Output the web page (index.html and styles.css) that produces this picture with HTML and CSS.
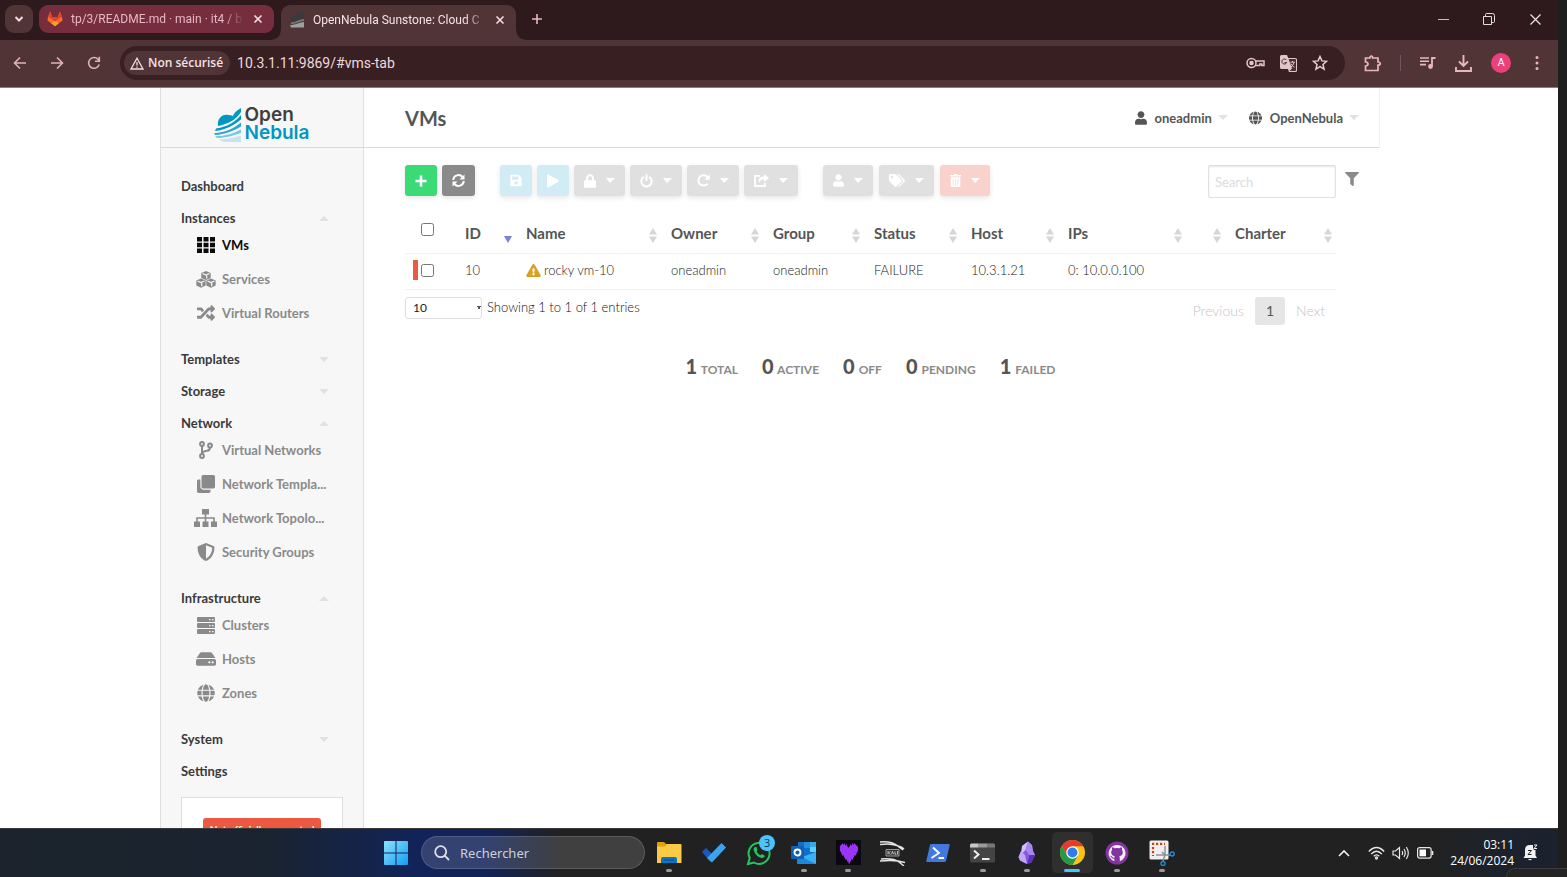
FILE: index.html
```html
<!DOCTYPE html>
<html lang="fr">
<head>
<meta charset="utf-8">
<title>OpenNebula Sunstone: Cloud Operations Center</title>
<link rel="stylesheet" href="styles.css">
</head>
<body>
<svg class="sprite" aria-hidden="true">
  <symbol id="i-globe" viewBox="0 0 496 512"><path d="M336.5 160C322 70.7 287.8 8 248 8s-74 62.7-88.5 152h177zM152 256c0 22.2 1.2 43.5 3.3 64h185.3c2.1-20.5 3.3-41.8 3.3-64s-1.2-43.5-3.3-64H155.3c-2.1 20.5-3.3 41.8-3.3 64zm324.7-96c-28.6-67.9-86.5-120.4-158-141.6 24.4 33.8 41.2 84.7 50 141.6h108zM177.2 18.4C105.8 39.6 47.8 92.1 19.3 160h108c8.7-56.9 25.5-107.8 49.9-141.6zM487.4 192H372.7c2.1 21 3.3 42.5 3.3 64s-1.2 43-3.3 64h114.6c5.5-20.5 8.6-41.8 8.6-64s-3.1-43.5-8.5-64zM120 256c0-21.5 1.2-43 3.3-64H8.6C3.2 212.5 0 233.8 0 256s3.2 43.5 8.6 64h114.6c-2-21-3.2-42.5-3.2-64zm39.5 96c14.5 89.3 48.7 152 88.5 152s74-62.7 88.5-152h-177zm159.3 141.6c71.4-21.2 129.4-73.7 158-141.6h-108c-8.8 56.9-25.6 107.8-50 141.6zM19.3 352c28.6 67.9 86.5 120.4 158 141.6-24.4-33.8-41.2-84.7-50-141.6h-108z"/></symbol>
  <symbol id="i-user" viewBox="0 0 448 512"><path d="M224 256c70.7 0 128-57.3 128-128S294.7 0 224 0 96 57.3 96 128s57.3 128 128 128zm89.6 32h-16.7c-22.2 10.2-46.9 16-72.9 16s-50.6-5.8-72.9-16h-16.7C60.2 288 0 348.2 0 422.4V464c0 26.5 21.5 48 48 48h352c26.5 0 48-21.5 48-48v-41.6c0-74.2-60.2-134.4-134.4-134.4z"/></symbol>
  <symbol id="i-sort" viewBox="0 0 8 15"><path d="M0 6.500L4 0l4 6.500zM0 8.500h8L4 15z"/></symbol>
  <symbol id="i-cross" viewBox="0 0 10 10"><path d="M1.500 1.500l7 7m0-7l-7 7" fill="none" stroke="currentColor" stroke-width="1.600"/></symbol>
</svg>
<div class="desktop">
  <div class="screen">
    <header class="tabstrip">
      <button class="tab-search" aria-label="Rechercher dans les onglets"><svg width="10" height="8" viewBox="0 0 10 8"><path d="M1.500 2L5 5.500 8.500 2" fill="none" stroke="#f0dadd" stroke-width="2"/></svg></button>
      <div class="tab">
        <svg class="favicon" width="16" height="16" viewBox="0 0 16 16"><path d="M8 15.200L.5 9.500 1 6 3.200.5 5.200 6h5.600l2-5.500L15 6l.5 3.500z" fill="#fc6d26"/><path d="M8 15.200L4.300 12.300 8 9.500l3.700 2.800z" fill="#fca326"/><path d="M3.200.5l2 5.500h5.600l2-5.500L15 6l-1 .2L8 10.500 2 6.200 1 6z" fill="#e24329"/></svg>
        <span class="tab-title">tp/3/README.md · main · it4 / b</span>
        <button class="tab-close" aria-label="Fermer"><svg width="10" height="10"><use href="#i-cross"/></svg></button>
      </div>
      <div class="tab tab-active">
        <svg class="favicon" width="14" height="16" viewBox="0 0 14 16"><path d="M2 8C1 5 4 3 6 4c1-3 4-4 8-4v6C10 6 7 9 2 9z" fill="#373b3b"/><path d="M1 10.500C6 10.500 8 7.500 14 7v2C8 9.500 7 12 1 12z" fill="#737878"/><path d="M0 13c6 0 8-2.500 14-3v5.500H1z" fill="#9da1a1"/></svg>
        <span class="tab-title">OpenNebula Sunstone: Cloud C</span>
        <button class="tab-close" aria-label="Fermer"><svg width="10" height="10"><use href="#i-cross"/></svg></button>
      </div>
      <button class="tab-new" aria-label="Nouvel onglet"><svg width="12" height="12" viewBox="0 0 12 12"><path d="M6 1v10M1 6h10" stroke="#e9b9c1" stroke-width="1.600"/></svg></button>
      <div class="window-controls">
        <button aria-label="Réduire"><svg width="11" height="11"><path d="M0 5.500h11" stroke="#c9bdbe"/></svg></button>
        <button aria-label="Niveau inférieur"><svg width="12" height="12" fill="none" stroke="#e5dcdd"><path d="M.5 3.500h8v8h-8zM2.500 3V1.500q0-1 1-1h6q2 0 2 2v6q0 1-1 1H9"/></svg></button>
        <button aria-label="Fermer la fenêtre"><svg width="11" height="11"><path d="M.5.5l10 10m0-10l-10 10" stroke="#eee5e6" stroke-width="1.200"/></svg></button>
      </div>
    </header>
    <nav class="toolbar" aria-label="Navigation">
      <div class="nav-buttons">
        <button aria-label="Retour"><svg width="14" height="14" viewBox="0 0 14 14" fill="none" stroke="#e0b3ba" stroke-width="1.600"><path d="M13 7H2M7 1.500L1.500 7 7 12.500"/></svg></button>
        <button aria-label="Avancer"><svg width="14" height="14" viewBox="0 0 14 14" fill="none" stroke="#e0b3ba" stroke-width="1.600"><path d="M1 7h11M7 1.500L12.500 7 7 12.500"/></svg></button>
        <button aria-label="Actualiser"><svg width="14" height="14" viewBox="0 0 14 14" fill="none" stroke="#e0b3ba" stroke-width="1.600"><path d="M12.200 8.500A5.400 5.400 0 1 1 11 3.200L12 4.500M12.300.8v4.400H8"/></svg></button>
      </div>
      <div class="omnibox">
        <button class="site-chip"><svg width="14" height="13" viewBox="0 0 14 13"><path d="M7 1.200L13 12H1z" fill="none" stroke="#f4dde0" stroke-width="1.300"/><path d="M7 5v3.500M7 9.500v1.200" stroke="#f4dde0" stroke-width="1.300"/></svg>Non sécurisé</button>
        <input class="url" type="text" aria-label="Adresse" value="10.3.1.11:9869/#vms-tab">
        <div class="omni-icons">
          <button aria-label="Mots de passe"><svg width="19" height="12" viewBox="0 0 19 12" fill="none" stroke="#e3c4c8" stroke-width="1.500"><circle cx="5.500" cy="6" r="4.500"/><circle cx="5.500" cy="6" r="1.500" fill="#e3c4c8"/><path d="M9.600 4H18v4.500h-2.200V7h-2v1.500H9.200"/></svg></button>
          <button aria-label="Traduire"><svg width="17" height="17" viewBox="0 0 17 17"><path d="M1.500 0H7l1.200 3H15q2 0 2 1.500v11q0 1.500-1.500 1.500H9L8 14H1.500Q0 14 0 12.500v-11Q0 0 1.500 0z" fill="#e3c4c8"/><path d="M8.600 4h6.600q.8 0 .8.800v10.400q0 .8-.8.8H9.500l2.500-2.500z" fill="#4a2d31"/><path d="M6.500 5.200A2.500 2.500 0 1 0 6.700 7.500H4.600" fill="none" stroke="#4a2d31"/><path d="M10.500 7.200H15M12.500 6v1M14 7.500q-.8 3-3 4.500m0-3.500q1 2.500 3.500 4" fill="none" stroke="#e3c4c8"/></svg></button>
          <button aria-label="Favori"><svg width="16" height="16" viewBox="0 0 16 16"><path d="M8 1.500l1.900 4.400 4.700.4-3.600 3.100 1.100 4.700L8 11.600l-4.100 2.500L5 9.400 1.400 6.300l4.700-.4z" fill="none" stroke="#e9cdd1" stroke-width="1.500"/></svg></button>
        </div>
      </div>
      <div class="ext-icons">
        <button aria-label="Extensions"><svg width="17" height="17" viewBox="0 0 17 17"><path d="M1.500 3H6q0-2 1.300-2T8.600 3H14v4q2.200 0 2.200 1.600T14 10.200V15.500H1.500V11Q4 10.800 4 9T1.500 7z" fill="none" stroke="#e9b6be" stroke-width="1.700"/></svg></button>
        <span class="ext-sep"></span>
        <button aria-label="Multimédia"><svg width="16" height="14" viewBox="0 0 16 14"><path d="M0 2h9M0 5.300h9M0 8.600h6" stroke="#e9b6be" stroke-width="1.600"/><path d="M12 10V2h3.500" fill="none" stroke="#e9b6be" stroke-width="1.800"/><circle cx="10.500" cy="10.500" r="2.400" fill="#e9b6be"/></svg></button>
        <button aria-label="Téléchargements"><svg width="17" height="17" viewBox="0 0 17 17" fill="none" stroke="#e9b6be" stroke-width="1.900"><path d="M8.500 0v10.500M4 6.500L8.500 11 13 6.500M1 12v4h15v-4"/></svg></button>
        <button class="avatar" aria-label="Profil">A</button>
        <button class="more" aria-label="Menu"><svg width="4" height="16" fill="#e9b6be"><circle cx="2" cy="2.500" r="1.500"/><circle cx="2" cy="8" r="1.500"/><circle cx="2" cy="13.500" r="1.500"/></svg></button>
      </div>
    </nav>
    <div class="page">
      <div class="app">
        <aside class="sidebar">
          <a class="brand" href="#dashboard-tab">
            <svg width="27" height="34" viewBox="0 0 27 34"><path d="M4 18C3 11 8 6 14 7q3 0 5 1Q21 3 27 0v4C22 12 14 16 4 18z" fill="#0098c3"/><path d="M2 20.500C14 19 22 13 27 7v4.500C20 17 12 22 1 23z" fill="#0098c3"/><path d="M0 25.200c12-.5 20-5.200 27-10.700v4C19 23 11 26.500 1 27z" fill="#2ba7cf"/><path d="M1 28.300C12 28.200 20 25 27 21.500V25c-8 2.500-15 5-24 5z" fill="#7ac7e1"/><path d="M5 31.300C13 31.300 20 29.500 27 27.500V34H10q-3-.5-5-2.700z" fill="#c3e5f1"/></svg>
            <span class="brand-text"><span>Open</span><span class="brand-blue">Nebula</span></span>
          </a>
          <ul class="menu">
            <li><a class="top" href="#d">Dashboard</a></li>
            <li><a class="top" href="#i">Instances<i class="tri up"></i></a>
              <ul class="sub">
                <li><a class="current" href="#vms-tab"><svg viewBox="0 0 18 16" width="18" height="16"><path d="M0 0h5v4.500H0zM6.500 0h5v4.500h-5zM13 0h5v4.500h-5zM0 5.800h5v4.500H0zM6.500 5.800h5v4.500h-5zM13 5.800h5v4.500h-5zM0 11.500h5V16H0zM6.500 11.500h5V16h-5zM13 11.500h5V16h-5z"/></svg><span>VMs</span></a></li>
                <li><a href="#s"><svg viewBox="0 0 20 17" width="20" height="17"><path d="M10 0l4.700 2v5L10 9 5.300 7V2zM5 7.500l4.700 2v5L5 16.800.3 14.500v-5zM15 7.500l4.700 2v5L15 16.800l-4.700-2.300v-5z"/><path d="M6.500 2.500L10 4l3.500-1.500M10.700 7.500V4.700M1.500 10L5 11.500 8.500 10M5.700 15.300v-3.200M11.500 10l3.500 1.500 3.500-1.500M15.700 15.300v-3.200" stroke="#f7f7f7" fill="none" stroke-width="1.200"/></svg><span>Services</span></a></li>
                <li><a href="#r"><svg viewBox="0 0 512 512" width="18" height="18"><path d="M504.971 359.029c9.373 9.373 9.373 24.569 0 33.941l-80 79.984c-15.010 15.010-40.971 4.490-40.971-16.971V416h-58.785a12.004 12.004 0 0 1-8.773-3.812l-70.556-75.596 53.333-57.143L352 336h32v-39.981c0-21.438 25.943-31.998 40.971-16.971l80 79.981zM12 176h84l52.781 56.551 53.333-57.143-70.556-75.596A11.999 11.999 0 0 0 122.785 96H12c-6.627 0-12 5.373-12 12v56c0 6.627 5.373 12 12 12zm372 0v39.984c0 21.460 25.961 31.980 40.971 16.971l80-79.984c9.373-9.373 9.373-24.569 0-33.941l-80-79.981C409.943 24.021 384 34.582 384 56.019V96h-58.785a12.004 12.004 0 0 0-8.773 3.812L96 336H12c-6.627 0-12 5.373-12 12v56c0 6.627 5.373 12 12 12h110.785c3.326 0 6.503-1.381 8.773-3.812L352 176h32z"/></svg><span>Virtual Routers</span></a></li>
              </ul></li>
            <li><a class="top" href="#t">Templates<i class="tri"></i></a></li>
            <li><a class="top" href="#st">Storage<i class="tri"></i></a></li>
            <li><a class="top" href="#n">Network<i class="tri up"></i></a>
              <ul class="sub">
                <li><a href="#vn"><svg viewBox="0 0 14 18" width="14" height="18"><g fill="none" stroke="currentColor" stroke-width="2"><circle cx="3" cy="3" r="1.900"/><circle cx="3" cy="15" r="1.900"/><circle cx="11" cy="4.500" r="1.900"/><path d="M3 5v8M11 6.500q0 3-3 3.300T3 12"/></g></svg><span>Virtual Networks</span></a></li>
                <li><a href="#nt"><svg viewBox="0 0 512 512" width="18" height="18"><path d="M464 0c26.510 0 48 21.490 48 48v288c0 26.510-21.490 48-48 48H176c-26.510 0-48-21.490-48-48V48c0-26.510 21.490-48 48-48h288M176 416c-44.112 0-80-35.888-80-80V128H48c-26.510 0-48 21.490-48 48v288c0 26.510 21.490 48 48 48h288c26.510 0 48-21.490 48-48v-48H176z"/></svg><span>Network Templa...</span></a></li>
                <li><a href="#ntp"><svg viewBox="0 0 23 18" width="23" height="18"><path d="M8 0h7v5.500H8zM0 12.500h6V18H0zM8.500 12.500h6V18h-6zM17 12.500h6V18h-6z"/><path d="M11.500 5v8M3 13V9h17v4" fill="none" stroke="currentColor" stroke-width="1.600"/></svg><span>Network Topolo...</span></a></li>
                <li><a href="#sg"><svg viewBox="0 0 512 512" width="18" height="18"><path d="M466.500 83.700l-192-80a48.150 48.150 0 0 0-36.900 0l-192 80C27.700 91.100 16 108.600 16 128c0 198.500 114.500 335.700 221.500 380.300 11.800 4.900 25.100 4.900 36.900 0C360.100 472.600 496 349.300 496 128c0-19.400-11.700-36.900-29.500-44.300zM256.100 446.300l-.1-381 175.900 73.300c-3.300 151.400-82.100 261.100-175.800 307.700z"/></svg><span>Security Groups</span></a></li>
              </ul></li>
            <li><a class="top" href="#in">Infrastructure<i class="tri up"></i></a>
              <ul class="sub">
                <li><a href="#c"><svg viewBox="0 0 18 17" width="18" height="17"><path fill-rule="evenodd" d="M1 0h16q1 0 1 1v3q0 1-1 1H1Q0 5 0 4V1Q0 0 1 0zM1 6h16q1 0 1 1v3q0 1-1 1H1q-1 0-1-1V7q0-1 1-1zM1 12h16q1 0 1 1v3q0 1-1 1H1q-1 0-1-1v-3q0-1 1-1zM12 2v1.200h1.500V2zM15 2v1.200h1.500V2zM12 8v1.200h1.500V8zM15 8v1.200h1.500V8zM12 14v1.200h1.500V14zM15 14v1.200h1.500V14z"/></svg><span>Clusters</span></a></li>
                <li><a href="#h"><svg viewBox="0 0 576 512" width="20" height="18"><path d="M576 304v96c0 26.510-21.490 48-48 48H48c-26.510 0-48-21.490-48-48v-96c0-26.510 21.490-48 48-48h480c26.510 0 48 21.490 48 48zm-48-80a79.557 79.557 0 0 1 30.777 6.165L462.250 85.374A48.003 48.003 0 0 0 422.311 64H153.689a48 48 0 0 0-39.938 21.374L17.223 230.165A79.557 79.557 0 0 1 48 224h480zm-48 96c-17.673 0-32 14.327-32 32s14.327 32 32 32 32-14.327 32-32-14.327-32-32-32zm-96 0c-17.673 0-32 14.327-32 32s14.327 32 32 32 32-14.327 32-32-14.327-32-32-32z"/></svg><span>Hosts</span></a></li>
                <li><a href="#z"><svg width="18" height="18"><use href="#i-globe"/></svg><span>Zones</span></a></li>
              </ul></li>
            <li><a class="top" href="#sy">System<i class="tri"></i></a></li>
            <li><a class="top" href="#se">Settings</a></li>
          </ul>
          <div class="support"><span class="support-tag">Not officially supported</span></div>
        </aside>
        <main class="main">
          <header class="topbar">
            <h1>VMs</h1>
            <div class="account">
              <button><svg width="12" height="14"><use href="#i-user"/></svg>oneadmin<i class="tri"></i></button>
              <button><svg width="13" height="14"><use href="#i-globe"/></svg>OpenNebula<i class="tri"></i></button>
            </div>
          </header>
          <div class="content">
            <div class="actions">
              <div class="group">
                <button class="btn green" aria-label="Create"><svg width="12" height="12" viewBox="0 0 12 12"><path d="M6 .5v11M.5 6h11" stroke="#fff" stroke-width="2.600"/></svg></button>
                <button class="btn dark" aria-label="Refresh"><svg width="13" height="13" viewBox="0 0 13 13"><path d="M1.200 6A5.300 5.300 0 0 1 10.500 3M11.800 7A5.300 5.300 0 0 1 2.500 10" fill="none" stroke="#fff" stroke-width="2"/><path d="M12.500.5v5h-5zM.5 12.500v-5h5z"/></svg></button>
              </div>
              <div class="group">
                <button class="btn blue" aria-label="Save" disabled><svg width="12" height="13" viewBox="0 0 448 512"><path d="M433.941 129.941l-83.882-83.882A48 48 0 0 0 316.118 32H48C21.490 32 0 53.490 0 80v352c0 26.510 21.490 48 48 48h352c26.510 0 48-21.490 48-48V163.882a48 48 0 0 0-14.059-33.941zM224 416c-35.346 0-64-28.654-64-64 0-35.346 28.654-64 64-64s64 28.654 64 64c0 35.346-28.654 64-64 64zm96-304.520V212c0 6.627-5.373 12-12 12H76c-6.627 0-12-5.373-12-12V108c0-6.627 5.373-12 12-12h228.520c3.183 0 6.235 1.264 8.485 3.515l3.480 3.480A11.996 11.996 0 0 1 320 111.480z"/></svg></button>
                <button class="btn blue" aria-label="Play" disabled><svg width="12" height="14" viewBox="0 0 12 14"><path d="M0 1.200Q0 0 1.200.6l10 5.500q1.200.9 0 1.800l-10 5.500Q0 14 0 12.800z"/></svg></button>
                <button class="btn" aria-label="Lock" disabled><svg width="12" height="14" viewBox="0 0 448 512"><path d="M400 224h-24v-72C376 68.200 307.800 0 224 0S72 68.200 72 152v72H48c-26.500 0-48 21.500-48 48v192c0 26.500 21.500 48 48 48h352c26.500 0 48-21.500 48-48V272c0-26.500-21.500-48-48-48zm-104 0H152v-72c0-39.700 32.300-72 72-72s72 32.300 72 72v72z"/></svg><i class="tri"></i></button>
                <button class="btn" aria-label="Power" disabled><svg width="13" height="14" viewBox="0 0 13 14"><path d="M3.800 2.800a5.200 5.200 0 1 0 5.400 0M6.500.5v6.500" fill="none" stroke="#fff" stroke-width="2"/></svg><i class="tri"></i></button>
                <button class="btn" aria-label="Reboot" disabled><svg width="13" height="13" viewBox="0 0 13 13"><path d="M10.500 9.800A5.200 5.200 0 1 1 10.500 3" fill="none" stroke="#fff" stroke-width="2"/><path d="M12.800.5v5.200H7.500z"/></svg><i class="tri"></i></button>
                <button class="btn" aria-label="Share" disabled><svg width="15" height="13" viewBox="0 0 15 13"><path d="M6 1.800H1v10.200h10V9" fill="none" stroke="#fff" stroke-width="1.800"/><path d="M10 0l5 4-5 4V5.500Q6 5.300 5 9 3 2.700 10 2.500z"/></svg><i class="tri"></i></button>
              </div>
              <div class="group wide">
                <button class="btn" aria-label="Ownership" disabled><svg width="11" height="13"><use href="#i-user"/></svg><i class="tri"></i></button>
                <button class="btn" aria-label="Labels" disabled><svg width="16" height="13" viewBox="0 0 640 512"><path d="M497.941 225.941L286.059 14.059A48 48 0 0 0 252.118 0H48C21.490 0 0 21.490 0 48v204.118a48 48 0 0 0 14.059 33.941l211.882 211.882c18.744 18.745 49.136 18.746 67.882 0l204.118-204.118c18.745-18.745 18.745-49.137 0-67.882zM112 160c-26.510 0-48-21.490-48-48s21.490-48 48-48 48 21.490 48 48-21.490 48-48 48zm513.941 133.823L421.823 497.941c-18.745 18.745-49.137 18.745-67.882 0l-.36-.36L527.640 323.522c16.999-16.999 26.360-39.600 26.360-63.640s-9.362-46.641-26.360-63.640L331.397 0h48.721a48 48 0 0 1 33.941 14.059l211.882 211.882c18.745 18.745 18.745 49.137 0 67.882z"/></svg><i class="tri"></i></button>
                <button class="btn red" aria-label="Delete" disabled><svg width="11" height="13" viewBox="0 0 11 13"><path fill-rule="evenodd" d="M0 1h3.500l.5-1h3l.5 1H11v1.500H0zM.7 3.300h9.600V12q0 1-1 1H1.700q-1 0-1-1zM2.800 5v6.500h.7V5zM5.200 5v6.500h.7V5zM7.500 5v6.500h.7V5z"/></svg><i class="tri"></i></button>
              </div>
              <div class="search">
                <input type="search" placeholder="Search" aria-label="Search">
                <button class="filter" aria-label="Filter"><svg width="14" height="14" viewBox="0 0 512 512"><path d="M487.976 0H24.028C2.710 0-8.047 25.866 7.058 40.971L192 225.941V432c0 7.831 3.821 15.170 10.237 19.662l80 55.980C298.020 518.690 320 507.493 320 487.980V225.941l184.947-184.970C520.021 25.896 509.338 0 487.976 0z"/></svg></button>
              </div>
            </div>
            <table class="vms">
              <colgroup><col class="w-check"><col class="w-id"><col class="w-name"><col class="w-std"><col class="w-group"><col class="w-narrow"><col class="w-narrow"><col class="w-ips"><col class="w-empty"><col class="w-charter"></colgroup>
              <thead><tr>
                <th class="check-cell"><input type="checkbox" aria-label="Select all"></th>
                <th><div class="th">ID<svg class="sort active" viewBox="0 0 8 15"><path d="M0 8h8L4 15z"/></svg></div></th>
                <th><div class="th">Name<svg class="sort"><use href="#i-sort"/></svg></div></th>
                <th><div class="th">Owner<svg class="sort"><use href="#i-sort"/></svg></div></th>
                <th><div class="th">Group<svg class="sort"><use href="#i-sort"/></svg></div></th>
                <th><div class="th">Status<svg class="sort"><use href="#i-sort"/></svg></div></th>
                <th><div class="th">Host<svg class="sort"><use href="#i-sort"/></svg></div></th>
                <th><div class="th">IPs<svg class="sort"><use href="#i-sort"/></svg></div></th>
                <th><div class="th"><svg class="sort"><use href="#i-sort"/></svg></div></th>
                <th><div class="th">Charter<svg class="sort"><use href="#i-sort"/></svg></div></th>
              </tr></thead>
              <tbody><tr>
                <td><div class="row-check"><input type="checkbox" aria-label="Select VM 10"></div></td>
                <td>10</td>
                <td><div class="vm-name"><svg width="15" height="13" viewBox="0 0 576 512" fill="#daa11e"><path d="M569.517 440.013C587.975 472.007 564.806 512 527.940 512H48.054c-36.937 0-59.999-40.055-41.577-71.987L246.423 23.985c18.467-32.009 64.720-31.951 83.154 0l239.940 416.028zM288 354c-25.405 0-46 20.595-46 46s20.595 46 46 46 46-20.595 46-46-20.595-46-46-46zm-43.673-165.346l7.418 136c.347 6.364 5.609 11.346 11.982 11.346h48.546c6.373 0 11.635-4.982 11.982-11.346l7.418-136c.375-6.874-5.098-12.654-11.982-12.654h-63.383c-6.884 0-12.356 5.780-11.981 12.654z"/></svg>rocky vm-10</div></td>
                <td>oneadmin</td><td>oneadmin</td><td>FAILURE</td><td>10.3.1.21</td><td>0: 10.0.0.100</td><td></td><td></td>
              </tr></tbody>
            </table>
            <div class="table-foot">
              <select aria-label="Entries per page"><option>10</option><option>25</option></select>
              <span class="showing">Showing 1 to 1 of 1 entries</span>
              <div class="pager"><a href="#prev">Previous</a><a class="on" href="#1">1</a><a href="#next">Next</a></div>
            </div>
            <div class="totals">
              <span><b>1</b> TOTAL</span><span><b>0</b> ACTIVE</span><span><b>0</b> OFF</span><span><b>0</b> PENDING</span><span><b>1</b> FAILED</span>
            </div>
          </div>
        </main>
      </div>
    </div>
    <footer class="taskbar">
      <div class="task-center">
        <button class="start" aria-label="Démarrer"><svg width="24" height="24" viewBox="0 0 24 24"><defs><linearGradient id="win" x1="0" y1="0" x2="1" y2="1"><stop offset="0" stop-color="#8be3fb"/><stop offset="1" stop-color="#149bf5"/></linearGradient></defs><path d="M0 1q0-1 1-1h10.500v11.500H0zM12.500 0H23q1 0 1 1v10.500H12.500zM0 12.500h11.500V24H1q-1 0-1-1zM12.500 12.500H24V23q0 1-1 1H12.500z" fill="url(#win)"/></svg></button>
        <label class="task-search"><svg width="16" height="16" viewBox="0 0 16 16" fill="none" stroke="#dfe1ea" stroke-width="1.800"><circle cx="6.700" cy="6.700" r="5.500"/><path d="M10.700 10.700l4.300 4.300"/></svg><input type="text" placeholder="Rechercher" aria-label="Rechercher"></label>
        <div class="apps">
          <button class="run" aria-label="Explorateur"><svg width="26" height="24" viewBox="0 0 26 24"><path d="M1 2q0-1 1-1h6l2 2h5v6H1z" fill="#e0a208"/><path d="M1 5.500h8L11 3h13.500q1 0 1 1v18H1z" fill="#fccb45"/><path d="M5 22v-4q0-2 2-2h12q2 0 2 2v4z" fill="#0f72c4"/><path d="M8 19h10" stroke="#0a4f90"/></svg></button>
          <button aria-label="To Do"><svg width="26" height="24" viewBox="0 0 26 24"><path d="M1 11l4-4 6 6-1.500 8z" fill="#195abd"/><path d="M6 17L20.500 2l4.500 4.500L11 21.500z" fill="#3fa2f0"/></svg></button>
          <button aria-label="WhatsApp"><svg width="26" height="26" viewBox="0 0 26 26"><path d="M2 24l1.700-6A10.500 10.500 0 1 1 8 22.500z" fill="none" stroke="#22c55e" stroke-width="2"/><path d="M9 7q-2 1.500-1 4 2 5.500 7.500 7 2.500.3 3.500-2l-3-2-1.500 1.300q-2.500-1-4-4L11.500 10 10.500 7z" fill="#22c55e"/></svg><span class="badge">3</span></button>
          <button class="run" aria-label="Outlook"><svg width="26" height="24" viewBox="0 0 26 24"><path d="M7 1h18v14H7z" fill="#1170c6"/><path d="M13 1h6v6h-6z" fill="#2490e0"/><path d="M19 1h6v5h-6z" fill="#36a8ee"/><path d="M19 6h6v5h-6z" fill="#55d1fb"/><path d="M6 11l9 5 10-5v11q0 1-1 1H7q-1 0-1-1z" fill="#1a89dc"/><path d="M25 11v12L11 16z" fill="#3bb0f2"/><rect y="5" width="13" height="13" rx="1" fill="#0f60b8"/><circle cx="6.500" cy="11.500" r="3" fill="none" stroke="#fff" stroke-width="1.900"/></svg></button>
          <button class="run" aria-label="Cœur"><svg width="25" height="25" viewBox="0 0 25 25"><path d="M0 0h25v25H0z" fill="#0b0812"/><path d="M4 5.500h1V4.500h1v-1h1v1h1v-1h1v2h1v-1h1v2h1v1h1v-1h1v-2h1v1h1v-2h1v1h1v-1h1v1h1v1h1v1h1v5h-1v2h-1v2h-2v2h-1v2h-2v2h-1v2h-1.500v-2H11v-2H9v-2H8v-2H6v-2H5v-2H4z" fill="#9b35f5"/></svg></button>
          <button aria-label="Kali"><svg width="26" height="26" viewBox="0 0 26 26" fill="none" stroke="#e5e5e5"><path d="M0 2q11-1 18 4 4 1 6 3M0 4.500Q10 3 17 5.500L23 10" stroke-width="1.500"/><path d="M1 19q13-1 18 3l5 4M0 21q11-1 18 0l7 1.500" stroke-width="1.500"/><path d="M6 9.500h13v6.500H6z" stroke="#999" fill="#333"/><path d="M8 11v3.500m2.500-3.500L8.500 13l2 1.500m1-.2l1-3 1 3m1.500-3v3h1.500M17.500 11v3.500" stroke-width=".8"/></svg></button>
          <button aria-label="PowerShell"><svg width="24" height="20" viewBox="0 0 24 20"><path d="M5 1h18q1 0 .7 1L20 18q-.3 1-1.300 1H1q-1 0-.7-1L4 2q.2-1 1-1z" fill="#4379dd"/><path d="M7 4.500l6 5.500-7.500 5M12.500 15H18" fill="none" stroke="#fff" stroke-width="1.800"/></svg></button>
          <button class="run" aria-label="Terminal"><svg width="25" height="20" viewBox="0 0 25 20"><rect width="25" height="19" y=".5" rx="1.500" fill="#444"/><path d="M0 4.500V2Q0 .5 1.500.5H8v4z" fill="#c5c5c5"/><path d="M8 .5h9v4H8z" fill="#999"/><path d="M17 .5h6.500Q25 .5 25 2v2.500h-8z" fill="#777"/><path d="M4 7.500l4.500 4L4 15.500M12 16h7.500" fill="none" stroke="#eee" stroke-width="2"/></svg></button>
          <button class="run" aria-label="Obsidian"><svg width="18" height="24" viewBox="0 0 18 24"><path d="M10 .5l4 3.500 1 6 2 4-3.500 7.500L9 23l-7-3.500L.5 16 3 10 4 5z" fill="#8558e0"/><path d="M10 .5L4 5l-.5 8 4-4z" fill="#d2c0fa"/><path d="M10 .5L7.500 9l4 5 5.500 0-2-4-1-6z" fill="#a786ee"/><path d="M3 10l4 4 2 9-7-3.500L.5 16z" fill="#c0a6f5"/><path d="M11.500 14H17l-3.500 7.500L9 23z" fill="#5d31b5"/></svg></button>
          <button class="run focused" aria-label="Chrome"><svg width="25" height="25" viewBox="0 0 24 24"><circle cx="12" cy="12" r="12" fill="#fbc116"/><path d="M12 6h10.400A12 12 0 0 0 1.600 6L7 15z" fill="#e33b2e"/><path d="M1.600 6A12 12 0 0 0 12 24l5.200-9H7z" fill="#229a48"/><circle cx="12" cy="12" r="6" fill="#fff"/><circle cx="12" cy="12" r="4.800" fill="#2f7de9"/></svg></button>
          <button class="run" aria-label="GitHub Desktop"><svg width="24" height="24" viewBox="0 0 24 24"><circle cx="12" cy="12" r="11.500" fill="#82359f"/><path d="M12 4a8.300 8.300 0 0 0-2.700 16.200v-2.600q-2.500.5-3.200-1.500l-1-1.200q1.300-.3 2.200 1.200.8 1 2.100.5l.5-1.200q-3.700-.6-3.700-4.300 0-1.300.9-2.400-.4-1.200.2-2.400 1 0 2.500 1 2.200-.5 4.400 0 1.500-1 2.500-1 .6 1.200.2 2.400.9 1.100.9 2.400 0 3.700-3.700 4.300.7.600.7 1.800v3A8.300 8.300 0 0 0 12 4z" fill="#f5eef8"/></svg></button>
          <button class="run" aria-label="Capture"><svg width="26" height="26" viewBox="0 0 26 26"><rect x=".5" y=".5" width="19" height="19" rx="1.500" fill="#f0efef"/><path d="M3 3.800h13" stroke="#d43c18" stroke-width="2.200" stroke-dasharray="2.200 1.800"/><path d="M4 7v9" stroke="#d43c18" stroke-width="2.200" stroke-dasharray="2.200 1.800"/><path d="M16 6v9H7" fill="none" stroke="#a9a9a9" stroke-width="2"/><path d="M13 12l3 3h6M16 15l-2 6" fill="none" stroke="#8c8f93" stroke-width="1.500"/><circle cx="23.200" cy="14" r="2" fill="none" stroke="#1d8de0" stroke-width="1.400"/><circle cx="14" cy="23.500" r="2" fill="none" stroke="#1d8de0" stroke-width="1.400"/></svg></button>
        </div>
      </div>
      <div class="tray">
        <button aria-label="Icônes cachées"><svg width="12" height="8" viewBox="0 0 12 8"><path d="M1 7l5-5 5 5" fill="none" stroke="#eee" stroke-width="1.600"/></svg></button>
        <div class="tray-status">
          <svg width="17" height="14" viewBox="0 0 17 14" fill="none" stroke="#e8e8e8" stroke-width="1.300"><path d="M.8 5.500q7.700-8 15.400 0M3.200 8q5.300-5.500 10.600 0M5.700 10.300q2.800-2.800 5.600 0"/><circle cx="8.500" cy="12" r="1"/></svg>
          <svg width="18" height="14" viewBox="0 0 18 14" fill="none" stroke="#e8e8e8" stroke-width="1.200"><path d="M1 5h2.500L7.500 1.500v11L3.500 9H1zM10 5q1.300 2 0 4M12 3q2.500 4 0 8M14.300 1q4 6 0 12"/></svg>
          <svg width="17" height="12" viewBox="0 0 17 12"><rect x=".6" y=".6" width="13.500" height="10.500" rx="2" fill="none" stroke="#e8e8e8" stroke-width="1.200"/><path d="M2.500 2.500H9v6.800H2.500z" fill="#fff"/><path d="M15.500 4v4" stroke="#e8e8e8" stroke-width="1.600"/></svg>
        </div>
        <div class="clock"><span>03:11</span><span>24/06/2024</span></div>
        <svg width="15" height="17" viewBox="0 0 15 17"><path d="M2 6q0-5 5-5h3v3l1 2h1.500v5.500L14 14H.5L2 11.500z" fill="#f2f2f2"/><path d="M5 15h4q-2 2.500-4 0z" fill="#f2f2f2"/><path d="M11 1h3l-3 3.500h3" fill="none" stroke="#f2f2f2"/><path d="M5 6.500h3.500L5 10.500h3.500" fill="none" stroke="#222"/></svg>
      </div>
    </footer>
  </div>
  <div class="edge"></div>
  <div class="corner"></div>
</div>
</body>
</html>
```

FILE: styles.css
```css
* { box-sizing: border-box; }
body { margin: 0; font-family: Lato, "Liberation Sans", sans-serif; font-size: 13px; color: #4d4d4d; }
button { font: inherit; color: inherit; background: none; border: 0; padding: 0; display: flex; align-items: center; justify-content: center; }
a { color: inherit; text-decoration: none; }
ul { list-style: none; margin: 0; padding: 0; }
svg { flex: none; display: block; }
.sprite { position: absolute; width: 0; height: 0; }

.desktop { display: flex; height: 100vh; overflow: hidden; position: relative; }
.screen { flex: 1; min-width: 0; display: flex; flex-direction: column; background: #513436; }
.edge { width: 9px; background: #1e1e1e; }
.corner { position: absolute; right: 0; bottom: 0; width: 61px; height: 9px; background: #242424; border: 1px solid #3a3a3a; border-width: 1px 0 0 1px; border-top-left-radius: 9px; }

/* browser tabs */
.tabstrip { display: flex; height: 40px; padding: 5px 0 0 5px; background: #2e191c; font-family: Roboto, sans-serif; font-size: 12px; color: #f3dde0; }
.tab-search { width: 28px; height: 28px; border-radius: 9px; background: #513436; margin-right: 6px; }
.tab { display: flex; align-items: center; width: 235px; height: 28px; padding: 0 10px 0 8px; border-radius: 9px; background: #762e3f; color: #e6b9c1; }
.favicon { width: 16px; }
.tab-title { flex: 1; min-width: 0; margin: 0 8px; overflow: hidden; white-space: nowrap; line-height: 20px; -webkit-mask-image: linear-gradient(90deg, #000 88%, transparent); mask-image: linear-gradient(90deg, #000 88%, transparent); }
.tab-active { position: relative; height: 35px; margin-left: 7px; padding: 0 10px 6px 8px; border-radius: 9px 9px 0 0; background: #513436; color: #f6e2e5; }
.tab-active::before, .tab-active::after { content: ""; position: absolute; bottom: 0; width: 9px; height: 9px; }
.tab-active::before { left: -9px; background: radial-gradient(circle at 0 0, transparent 8px, #513436 9px); }
.tab-active::after { right: -9px; background: radial-gradient(circle at 100% 0, transparent 8px, #513436 9px); }
.tab-close { color: #f3dde0; width: 12px; height: 28px; }
.tab-new { width: 28px; height: 28px; margin-left: 7px; }
.window-controls { display: flex; margin-left: auto; }
.window-controls button { width: 46px; height: 28px; }

/* address bar */
.toolbar { display: flex; align-items: center; height: 48px; padding-bottom: 1px; background: #513436; border-bottom: 1px solid #8d7b7c; }
.nav-buttons { display: flex; width: 120px; padding-left: 1px; }
.nav-buttons button { width: 37px; height: 34px; }
.omnibox { flex: 1; display: flex; align-items: center; height: 34px; padding: 0 17px 0 4px; border-radius: 17px; background: #381f22; }
.site-chip { height: 24px; padding: 0 7px 0 6px; gap: 4px; border-radius: 12px; background: #513436; color: #f6e2e5; font: 600 12px/24px "Open Sans", sans-serif; white-space: nowrap; }
.url { flex: 1; min-width: 0; margin-left: 7px; padding: 0; border: 0; outline: 0; background: none; color: #ecd9db; font: 14px/20px Roboto, sans-serif; }
.omni-icons { display: flex; gap: 15px; align-items: center; }
.ext-icons { display: flex; align-items: center; gap: 19px; width: 213px; padding-left: 19px; }
.ext-sep { width: 1px; height: 16px; background: #74545a; }
.avatar { width: 20px; height: 20px; border-radius: 50%; background: #ec407a; color: #fff; font: 11px/20px Roboto, sans-serif; }
.more { margin-left: 5px; }

/* page */
.page { flex: 1; min-height: 0; overflow: hidden; padding-right: 18px; background: #fff; }
.app { display: flex; max-width: 1220px; min-height: 100%; margin: 0 auto; }
.sidebar { width: 204px; flex: none; background: #f7f7f7; border: 1px solid #dfdfdf; border-width: 0 1px; height: 900px; }
.brand { display: flex; align-items: flex-end; justify-content: center; height: 60px; padding-bottom: 5px; gap: 3px; border-bottom: 1px solid #d9d9d9; }
.brand-text { display: flex; flex-direction: column; font: 600 19px/18px Inter, Lato, sans-serif; color: #3f3f3f; }
.brand-blue { color: #0098c3; }
.menu { padding: 22px 0 0 20px; font-weight: 700; }
.top { display: flex; align-items: center; justify-content: space-between; height: 32px; padding-right: 34px; color: #3a3a3a; }
.sub { margin: -6px 0 13px; }
.sub a { display: grid; grid-template-columns: 23px 1fr; align-items: center; gap: 5px; height: 34px; padding-left: 13px; color: #8a8a8a; fill: currentColor; white-space: nowrap; }
.sub svg { margin: 0 auto; }
.sub a.current { color: #0a0a0a; }
.tri { width: 0; height: 0; border: 5px solid transparent; border-top-color: #e2e2e2; border-bottom-width: 0; }
.tri.up { border-top-width: 0; border-bottom: 5px solid #e2e2e2; }
.support { margin: 10px 20px 0; height: 160px; padding-top: 20px; background: #fff; border: 1px solid #dedede; text-align: center; }
.support-tag { display: inline-block; padding: 4px 7px; border-radius: 3px; background: #ec5840; color: #fff; font-size: 10px; line-height: 14px; font-weight: 700; white-space: nowrap; }

.main { flex: 1; min-width: 0; }
.topbar { display: flex; align-items: center; justify-content: space-between; height: 60px; padding: 0 20px 0 41px; border: 1px solid #dcdcdc; border-width: 0 1px 1px 0; border-right-color: #f0f0f0; }
.topbar h1 { margin: 0; font-size: 20px; font-weight: 700; line-height: 30px; color: #555; }
.account { display: flex; gap: 21px; font-weight: 700; color: #555; fill: #555; }
.account svg { margin-right: 8px; }
.account .tri { margin-left: 6px; }
.content { padding: 17px 44px 0 41px; }
.actions { display: flex; align-items: flex-start; gap: 25px; }
.group { display: flex; gap: 5px; }
.group.wide { gap: 6px; }
.btn { height: 31px; padding: 0 10px; gap: 10px; border-radius: 3px; background: #e0e0e0; color: #fff; fill: #fff; box-shadow: 0 2px 5px rgba(0, 0, 0, .1); }
.btn .tri { border-top-color: #fff; border-left-width: 4px; }
.btn.green { background: #3adb76; }
.btn.dark { background: #8a8a8a; }
.btn.blue { background: #d1ecf4; }
.btn.red { background: #f9d2cc; }
.search { display: flex; gap: 9px; margin: 0 -22px 0 auto; }
.search input { width: 128px; height: 33px; padding: 1px 6px 0; border: 1px solid #e0e0e0; border-radius: 2px; box-shadow: inset 0 1px 2px rgba(0, 0, 0, .1); outline: 0; background: #fff; font: 13px/20px Lato, sans-serif; }
.search input::placeholder { color: #dcdcdc; opacity: 1; }
.filter { width: 13px; height: 28px; fill: #8a8a8a; }

.vms { width: 100%; margin-top: 17px; border-collapse: collapse; table-layout: fixed; }
.w-check { width: 50px; } .w-id { width: 61px; } .w-name { width: 145px; } .w-std { width: 102px; } .w-group { width: 101px; } .w-narrow { width: 97px; }
.w-ips { width: 128px; } .w-empty { width: 39px; } .w-charter { width: 111px; }
.vms th, .vms td { padding: 0 0 2px 10px; text-align: left; border-bottom: 1px solid #f3f3f3; }
.vms th { height: 38px; font-size: 15px; font-weight: 700; color: #555; }
.vms td { height: 36px; font-weight: 300; color: #222; }
.th { display: flex; align-items: center; justify-content: space-between; padding-right: 4px; min-height: 20px; }
.sort { width: 8px; height: 15px; margin: 5px 0 0 auto; fill: #d6d6d6; }
.sort.active { fill: #7b7fe0; }
.vms input { display: block; width: 13px; height: 13px; margin: 0; }
.vms th.check-cell { padding: 0 0 9px 16px; }
.vms td:first-child { padding-left: 8px; }
.row-check { display: flex; align-items: center; height: 20px; padding-left: 3px; border-left: 5px solid #ec5840; }
.vm-name { display: flex; align-items: center; gap: 3px; }
.table-foot { display: flex; align-items: flex-start; gap: 5px; padding-top: 7px; }
.table-foot select { width: 77px; height: 22px; padding: 0 7px; border: 1px solid #dedede; border-radius: 3px; background: #fff; color: #222; font: 12px/20px Lato, sans-serif; appearance: none; background-image: conic-gradient(from -30deg at 50% 100%, #555 60deg, transparent 0); background-size: 4px 4px; background-position: right 0 center; background-repeat: no-repeat; }
.showing { line-height: 20px; font-weight: 300; color: #111; }
.pager { display: flex; margin-left: auto; color: #c4c4c4; font-size: 14px; font-weight: 300; line-height: 28px; }
.pager a { padding: 0 11px; }
.pager .on { background: #e6e6e6; color: #555; border-radius: 3px; font-weight: 400; }
.totals { display: flex; justify-content: center; gap: 24px; margin-top: 27px; font-size: 12px; line-height: 28px; font-weight: 700; color: #8a8a8a; }
.totals b { margin-right: 1px; font-size: 20px; color: #555; }

/* taskbar */
.taskbar { display: grid; grid-template-columns: 1fr auto 1fr; height: 49px; padding-bottom: 1px; background: linear-gradient(90deg, #1c232c 0, #1a2330 17%, #12235a 27%, #12235a 31%, #212121 36%, #212121 92%, #1b222e 98%); border-top: 1px solid #3a3a3a; font-family: "Open Sans", sans-serif; }
.task-center { grid-column: 2; display: flex; align-items: center; padding-left: 4px; }
.start { width: 36px; height: 40px; }
.task-search { display: flex; align-items: center; gap: 10px; width: 224px; height: 33px; margin: 0 2px 0 7px; padding: 0 12px; border: 1px solid rgba(255, 255, 255, .15); border-radius: 17px; background: rgba(255, 255, 255, .14); }
.task-search input { min-width: 0; flex: 1; padding: 0; border: 0; outline: 0; background: none; color: #d3d5de; font: 13px/20px "Noto Sans", sans-serif; }
.task-search input::placeholder { color: #ccd0dc; opacity: 1; }
.apps { display: flex; width: 537px; }
.apps button { flex: 1; height: 41px; border: 1px solid transparent; border-width: 0 2px; background-clip: padding-box; border-radius: 6px; position: relative; }
.apps .run::after { content: ""; position: absolute; left: 50%; bottom: 1px; width: 6px; height: 3px; margin-left: -3px; border-radius: 2px; background: #9a9a9a; }
.apps .focused { background-color: #2f2f2f; }
.apps .focused::after { width: 16px; margin-left: -8px; background: #4cc2ff; }
.badge { position: absolute; right: 4px; top: 3px; width: 16px; height: 16px; border-radius: 50%; background: #4cc2ff; color: #10384d; font: 11px/16px "Open Sans", sans-serif; text-align: center; }
.tray { display: flex; align-items: center; justify-content: flex-end; padding-right: 20px; }
.tray-status { display: flex; align-items: center; gap: 7px; margin: 0 16px 0 18px; }
.clock { display: flex; flex-direction: column; align-items: flex-end; margin-right: 9px; color: #fff; font: 12px/16px "Open Sans", sans-serif; }
```
